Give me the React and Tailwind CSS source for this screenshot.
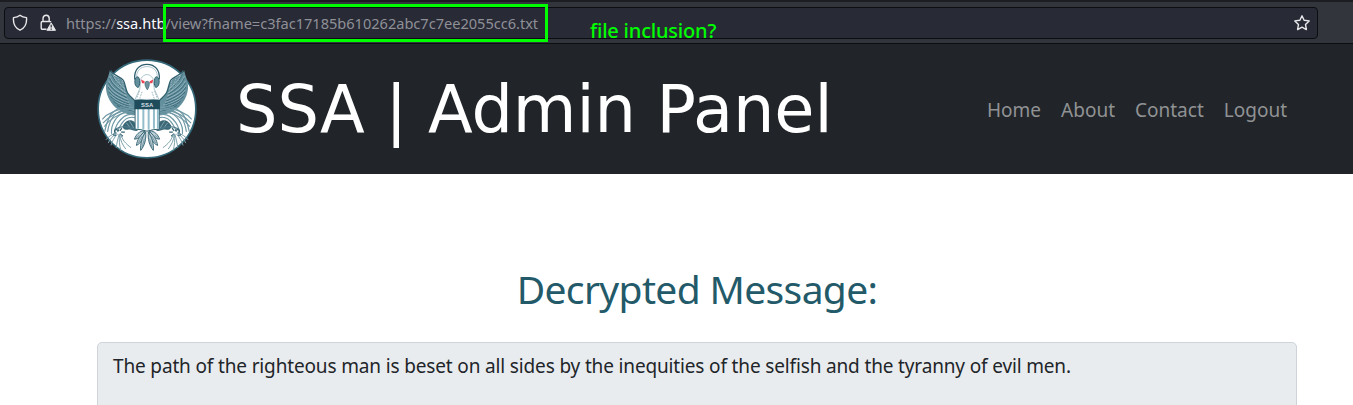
const NAV_LINKS = ['Home', 'About', 'Contact', 'Logout'];

const FEATHERS = [
  'M64 60 C70 78 84 92 106 112',
  'M58 72 C66 92 82 106 108 122',
  'M55 86 C64 106 82 118 110 132',
  'M54 100 C64 119 84 130 113 142',
  'M56 114 C68 131 88 141 117 151',
  'M61 128 C74 143 94 151 122 159',
  'M69 142 C82 154 100 160 128 167',
  'M80 155 C94 164 110 168 132 175',
];

const PLUMES = [
  'M130 166 C104 158 72 170 58 194 C50 210 46 224 43 240',
  'M131 173 C108 166 80 176 66 198 C57 212 54 226 52 240',
  'M132 181 C112 174 90 182 75 204 C66 218 62 232 64 246',
  'M133 189 C118 184 100 190 84 212 C76 224 72 234 74 248',
  'M134 197 C118 193 104 200 94 216 C88 226 84 232 82 240',
  'M120 172 C96 176 62 186 38 214',
  'M108 170 C84 172 56 180 36 202',
  'M112 180 C88 186 62 196 42 224',
];

const TAIL = [
  'M163 236 C148 238 138 248 133 262 C146 262 157 251 163 236Z',
  'M165 238 C151 249 141 264 139 281 C153 275 163 257 165 238Z',
  'M167 240 C156 257 150 276 152 296 C164 282 169 261 167 240Z',
];

function HalfEagle() {
  return (
    <g>
      <path
        d="M59 54 C63 67 75 72 86 77 C101 85 104 99 109 113 C115 133 128 140 137 151 L137 188 C116 192 92 180 75 166 C57 149 46 124 47 101 C48 84 55 72 59 54Z"
        fill="#64909d"
      />
      <g fill="none" stroke="#a9c3cb" strokeWidth="2">
        {FEATHERS.map((d) => (
          <path key={d} d={d} />
        ))}
      </g>
      <g fill="none" stroke="#3b6b7a" strokeWidth="3" transform="translate(0 5)">
        {FEATHERS.map((d) => (
          <path key={d} d={d} />
        ))}
      </g>
      <path
        d="M62 55 C67 69 90 72 99 84 C106 94 105 108 112 122 C120 135 130 140 138 151"
        fill="none"
        stroke="#2f5f6e"
        strokeWidth="4"
      />
      <path
        d="M73 76 L86 103 M84 80 L97 119 M96 88 L107 132"
        fill="none"
        stroke="#a4bec7"
        strokeWidth="2.5"
        strokeDasharray="4 4"
      />
      <g fill="none" stroke="#6f98a5" strokeWidth="3.5">
        {PLUMES.map((d) => (
          <path key={d} d={d} />
        ))}
      </g>
      <path d="M132 209 C118 200 107 207 99 219 C94 227 103 236 115 233 C124 231 131 239 143 237 L137 217Z" fill="#3b6877" />
      <path d="M109 213 L122 230 M118 208 L132 230" stroke="#a4bec7" strokeWidth="2" />
      <path d="M75 232 C94 220 114 222 139 233" fill="none" stroke="#4b7888" strokeWidth="4" />
      <path d="M86 237 C75 230 69 235 76 244 C66 247 69 254 78 250 M89 237 L95 229 M93 241 L104 241 M89 246 L98 253" fill="none" stroke="#34616f" strokeWidth="4" />
      <g fill="none" stroke="#7b9fab" strokeWidth="3">
        <path d="M82 246 C73 257 65 268 62 281 M87 246 C83 262 80 273 78 288 M92 246 C95 264 107 276 123 288 M89 248 C90 266 98 281 107 292 M80 243 C65 247 55 254 47 264 M88 248 C86 264 88 282 92 296 M78 246 C68 252 58 262 54 274" />
      </g>
      <g fill="#b9ced5" stroke="#3b6877" strokeWidth="3">
        {TAIL.map((d) => (
          <path key={d} d={d} />
        ))}
      </g>
      <path d="M147 250 L137 260 M157 253 L145 273 M163 261 L156 287" stroke="#3b6877" strokeWidth="1.5" />
    </g>
  );
}

function Seal() {
  return (
    <svg viewBox="20 20 302 302" className="mb-px size-[100px] shrink-0" aria-label="SSA">
      <circle cx="171" cy="171" r="147.5" fill="#fff" stroke="#34697a" strokeWidth="5" />
      <HalfEagle />
      <g transform="translate(342 0) scale(-1 1)">
        <HalfEagle />
      </g>
      {/* head and neck */}
      <path
        d="M153 79 C158 71 164 67 171 67 C178 67 184 71 189 79 L193 111 L207 142 L135 142 L149 111Z"
        fill="#fff"
        stroke="#86a8b2"
        strokeWidth="2"
      />
      <path d="M148 117 L141 136 M156 119 L149 140 M194 117 L201 136 M186 119 L193 140" stroke="#8cabb5" strokeWidth="2.5" strokeDasharray="5 3" />
      <path d="M165 91 C169 86 175 86 178 91 C179 100 176 107 172 113 C167 106 164 99 165 91Z" fill="#6f929d" stroke="#34616f" strokeWidth="2" />
      <path d="M153 82 L164 87 L163 93 L156 93Z M190 82 L179 87 L180 93 L187 93Z" fill="#ed4353" />
      {/* headphones */}
      <path d="M134 82 C131 54 147 36 171 36 C195 36 211 54 208 82" fill="none" stroke="#2f5f6e" strokeWidth="4" />
      <path d="M140 76 C138 57 151 43 171 43 C191 43 204 57 202 76" fill="none" stroke="#9dbac3" strokeWidth="2.5" />
      <g fill="#64909d" stroke="#2f5f6e" strokeWidth="3">
        <path d="M144 74 C131 72 131 104 144 106 C151 103 150 76 144 74Z" />
        <path d="M198 74 C211 72 211 104 198 106 C191 103 192 76 198 74Z" />
      </g>
      {/* shield */}
      <path d="M135 164 H208 V232 Q190 232 171 238 Q153 232 135 232Z" fill="#fff" stroke="#34616f" strokeWidth="3" />
      <path d="M144 171 V231 M160 171 V233 M176 171 V234 M192 171 V231 M204 171 V231" stroke="#94bdcb" strokeWidth="6" />
      <path d="M133 144 Q152 140 171 144 Q190 140 210 144 V172 H133Z" fill="#1e4c5b" />
      <text
        x="171.5"
        y="164"
        textAnchor="middle"
        className="fill-[#d3dfe3] font-['Liberation_Sans',sans-serif] text-[18px] font-bold"
      >
        SSA
      </text>
    </svg>
  );
}

function ShieldIcon() {
  return (
    <svg viewBox="0 0 16 18" className="h-[18px] w-4 shrink-0" fill="none" stroke="#e8e8eb" strokeWidth="1.4" strokeLinejoin="round">
      <path d="M8 1.3 C6.4 2.7 3.8 3.5 1.5 3.6 C1 8.8 3 14 8 16.2 C13 14 15 8.8 14.5 3.6 C12.2 3.5 9.6 2.7 8 1.3Z" />
    </svg>
  );
}

function LockWarningIcon() {
  return (
    <svg viewBox="0 0 16 18" className="h-[18px] w-4 shrink-0" fill="none">
      <path
        d="M6.5 15.2 H2.4 Q1.2 15.2 1.2 14 V8.8 Q1.2 7.5 2.4 7.5 H9.6 Q10.6 7.5 10.8 8.2 M3 7.5 V4.5 C3 .2 9.2 .2 9.2 4.5 V7.5"
        stroke="#e8e8eb"
        strokeWidth="1.4"
      />
      <path d="M11.2 8.9 L15.5 16.3 H6.9Z" fill="#e8e8eb" stroke="#e8e8eb" strokeLinejoin="round" />
      <path d="M11.2 10.8 V13.5 M11.2 14.5 V15.7" stroke="#282a36" strokeWidth="1.2" />
    </svg>
  );
}

function StarIcon() {
  return (
    <svg viewBox="0 0 18 18" className="size-[18px] shrink-0" fill="none" stroke="#e8e8eb" strokeWidth="1.4" strokeLinejoin="round">
      <path d="M9 1.8 L11.1 6.2 L16.2 6.9 L12.5 10.4 L13.4 15.6 L9 13.2 L4.6 15.6 L5.5 10.4 L1.8 6.9 L6.9 6.2Z" />
    </svg>
  );
}

function AddressBar() {
  return (
    <div className="relative h-11 border-t-2 border-b border-t-[#1c1d22] border-b-[#0c0d10] bg-[#32353c] pt-[5px] pl-1">
      <div className="flex h-8 w-[1314px] items-center rounded-[4px] border border-[#0c0d10] bg-[#282a36] pr-[6px] pl-[7px] text-[14.6px] text-[#8f9096]">
        <ShieldIcon />
        <div className="ml-3 flex">
          <LockWarningIcon />
        </div>
        <span className="ml-[10px] flex-1 pt-[2px] tracking-[-0.02px] whitespace-nowrap">
          https://<span className="text-[#fbfbfe]">ssa.htb</span>/view?fname=c3fac17185b610262abc7c7ee2055cc6.txt
        </span>
        <StarIcon />
      </div>
      <div className="absolute top-[2px] left-[163px] h-[38px] w-[385px] border-3 border-[#00ff00]" />
      <span className="absolute top-[17px] left-[590px] text-[20px] leading-6 font-medium tracking-[-0.2px] whitespace-nowrap text-[#00ff00]">
        file inclusion?
      </span>
    </div>
  );
}

function Header() {
  return (
    <header className="flex h-[130px] items-center bg-[#212529] pr-[66px] pl-[97px]">
      <Seal />
      <h1 className="ml-[39px] pt-[2px] font-['DejaVu_Sans',sans-serif] text-[65.4px] leading-none tracking-[-0.1px] whitespace-nowrap text-white">
        SSA | Admin Panel
      </h1>
      <nav className="ml-auto flex gap-5 pt-[2px] text-[19px] leading-6 text-[#909294]">
        {NAV_LINKS.map((label) => (
          <a key={label}>{label}</a>
        ))}
      </nav>
    </header>
  );
}

export default function App() {
  return (
    <div className="h-[405px] overflow-hidden bg-white font-['Noto_Sans',sans-serif]">
      <AddressBar />
      <Header />
      <main className="pr-[56px] pl-[97px] pt-[91px]">
        <h2 className="h-[77px] text-center text-[39px] leading-12 tracking-[-0.65px] text-[#235a69]">
          Decrypted Message:
        </h2>
        <div className="h-24 rounded-[5px] border border-[#ced4da] bg-[#e9ecef] px-[15px] pt-[11px] text-[19px] leading-6 tracking-[-0.15px] whitespace-nowrap text-[#212529]">
          The path of the righteous man is beset on all sides by the inequities of the selfish and the tyranny of evil men.
        </div>
      </main>
    </div>
  );
}
